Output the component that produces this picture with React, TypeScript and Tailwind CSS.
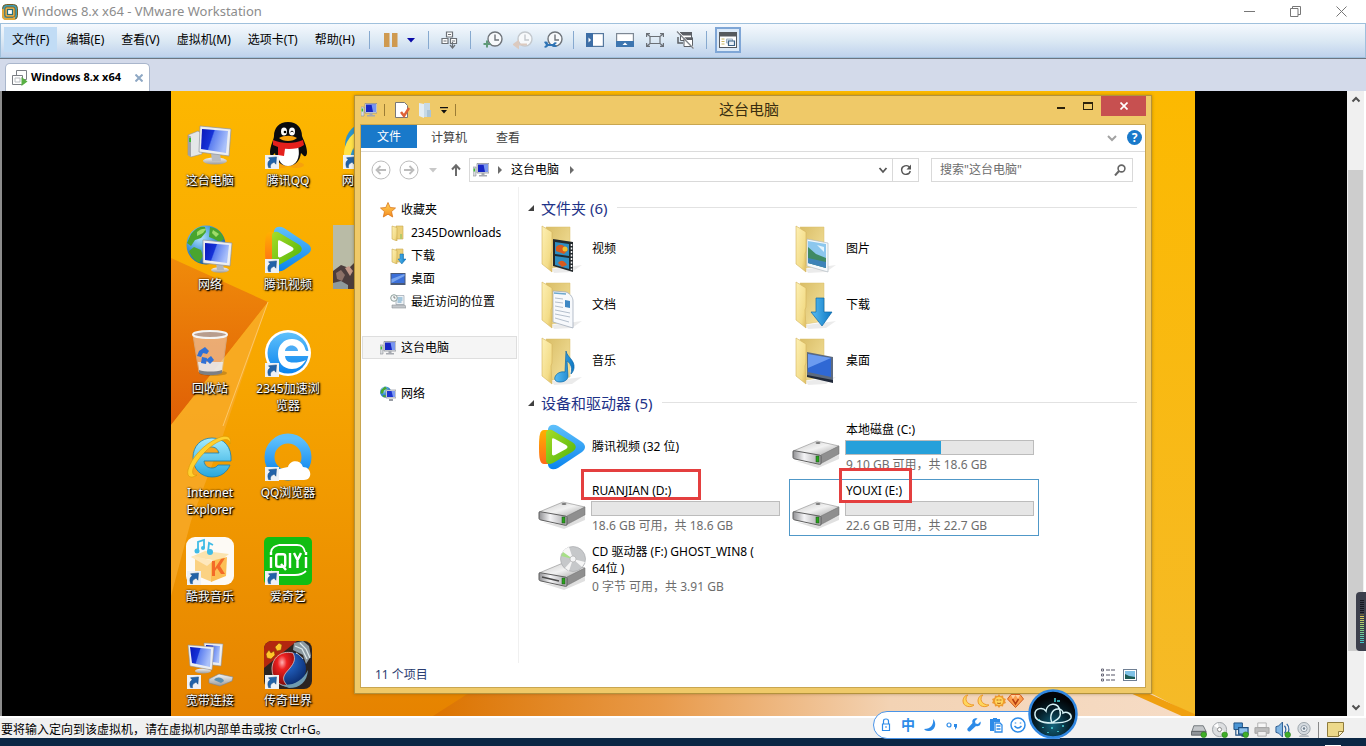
import type { ReactNode } from 'react';

type IconProps = { className?: string };

/* ---------- shared gradients ---------- */

function Gradients() {
  return (
    <svg className="absolute h-0 w-0" aria-hidden="true">
      <defs>
        <linearGradient id="screen" x1="0" y1="0" x2="1" y2="0.3">
          <stop offset="0" stopColor="#0a18b8" />
          <stop offset="0.45" stopColor="#1633d8" />
          <stop offset="0.5" stopColor="#5d7ff0" />
          <stop offset="1" stopColor="#a9c0fa" />
        </linearGradient>
        <linearGradient id="metal" x1="0" y1="0" x2="0" y2="1">
          <stop offset="0" stopColor="#f6f6f6" />
          <stop offset="1" stopColor="#9a9a9a" />
        </linearGradient>
        <linearGradient id="folderDoor" x1="0" y1="0" x2="1" y2="1">
          <stop offset="0" stopColor="#fdf0b4" />
          <stop offset="0.7" stopColor="#f3dc88" />
          <stop offset="1" stopColor="#dcb95a" />
        </linearGradient>
        <linearGradient id="folderBack" x1="0" y1="0" x2="1" y2="1">
          <stop offset="0" stopColor="#d9bd66" />
          <stop offset="1" stopColor="#f6e4a0" />
        </linearGradient>
        <linearGradient id="sky" x1="0" y1="0" x2="0" y2="1">
          <stop offset="0" stopColor="#5fc0fb" />
          <stop offset="1" stopColor="#0a84ee" />
        </linearGradient>
        <linearGradient id="lime" x1="0" y1="0" x2="1" y2="1">
          <stop offset="0" stopColor="#a6dc28" />
          <stop offset="1" stopColor="#4fb409" />
        </linearGradient>
        <linearGradient id="amber" x1="0" y1="0" x2="0" y2="1">
          <stop offset="0" stopColor="#ffb000" />
          <stop offset="1" stopColor="#ff6a1a" />
        </linearGradient>
        <radialGradient id="globe" cx="0.35" cy="0.3" r="0.8">
          <stop offset="0" stopColor="#b7e6ff" />
          <stop offset="0.5" stopColor="#3d93d9" />
          <stop offset="1" stopColor="#12508f" />
        </radialGradient>
        <linearGradient id="blueArrow" x1="0" y1="0" x2="1" y2="0">
          <stop offset="0" stopColor="#58bdf2" />
          <stop offset="1" stopColor="#0e78c4" />
        </linearGradient>
        <linearGradient id="ieBlue" x1="0" y1="0" x2="0" y2="1">
          <stop offset="0" stopColor="#a5ecff" />
          <stop offset="1" stopColor="#28a7dd" />
        </linearGradient>
        <linearGradient id="driveFront" x1="0" y1="0" x2="1" y2="0">
          <stop offset="0" stopColor="#8f8f92" />
          <stop offset="0.4" stopColor="#f4f4f6" />
          <stop offset="1" stopColor="#a8a8aa" />
        </linearGradient>
        <linearGradient id="driveTop" x1="0" y1="0" x2="1" y2="1">
          <stop offset="0" stopColor="#c8c8c8" />
          <stop offset="0.5" stopColor="#f2f2f2" />
          <stop offset="1" stopColor="#9e9e9e" />
        </linearGradient>
        <linearGradient id="star" x1="0" y1="0" x2="0" y2="1">
          <stop offset="0" stopColor="#ffd55a" />
          <stop offset="1" stopColor="#f68b1f" />
        </linearGradient>
        <radialGradient id="redBall" cx="0.45" cy="0.3" r="0.7">
          <stop offset="0" stopColor="#ffb3b3" />
          <stop offset="0.3" stopColor="#ee2020" />
          <stop offset="1" stopColor="#7c0808" />
        </radialGradient>
        <radialGradient id="blueBall" cx="0.4" cy="0.3" r="0.8">
          <stop offset="0" stopColor="#2c76e0" />
          <stop offset="1" stopColor="#06215f" />
        </radialGradient>
        <radialGradient id="night" cx="0.5" cy="0.75" r="0.6">
          <stop offset="0" stopColor="#12637c" />
          <stop offset="0.6" stopColor="#05202b" />
          <stop offset="1" stopColor="#020407" />
        </radialGradient>
      </defs>
    </svg>
  );
}

/* ---------- desktop icons ---------- */

function Shortcut() {
  return (
    <g>
      <rect x="1" y="34" width="14" height="14" fill="#eef1f5" />
      <path d="M4.500 46.500c-1.300-4-.6-6.300 1.700-7.800L4.500 36.800l8-.9-.6 7.300-1.700-1.900C8 42 5.800 43.600 6.600 46.700z" fill="#2162a8" stroke="#174a80" strokeWidth=".5" />
    </g>
  );
}

function ComputerIcon() {
  return (
    <svg viewBox="0 0 48 48" className="size-12">
      <path d="M2 14l10-4 4 3v20l-11 3-3-2z" fill="#e4e6e8" stroke="#8d9197" strokeWidth=".6" />
      <path d="M2 14l3 1.500V36l-3-2z" fill="#9da1a6" />
      <rect x="3" y="17" width="2" height="4" fill="#3bbf2e" />
      <ellipse cx="29" cy="40" rx="12" ry="3.500" fill="url(#metal)" />
      <path d="M25 32h9l1 8h-9z" fill="#b9bcc2" />
      <path d="M14 5l31 3-2 27-30-4z" fill="#eceef1" stroke="#8e929b" strokeWidth=".7" />
      <path d="M16 8l26 2-2 22-25-4z" fill="url(#screen)" />
    </svg>
  );
}

function NetworkIcon() {
  return (
    <svg viewBox="0 0 48 48" className="size-12">
      <circle cx="20" cy="20" r="19.500" fill="url(#globe)" />
      <path d="M5 9c5-6 9-8 14-7l1 5-5 6-6 2-4 6-4-3zM24 2c7 1 12 5 14 12l-4 3-6-3-5-2zM8 22l7 3 2 6-4 7c-5-3-8-7-10-12z" fill="#49a52e" />
      <path d="M11 7c3-3 7-4 9-3l-3 4-6 3zM27 5l6 4-3 3-4-4z" fill="#9fdc6a" />
      <ellipse cx="34" cy="45" rx="9" ry="2.800" fill="url(#metal)" />
      <path d="M30 38h7l1 7h-7z" fill="#b3b6bc" />
      <path d="M17 15l29 3-2 23-27-3z" fill="#eceef1" stroke="#8e929b" strokeWidth=".7" />
      <path d="M19 18l24 2-2 18-22-3z" fill="url(#screen)" />
    </svg>
  );
}

function BinIcon() {
  return (
    <svg viewBox="0 0 48 48" className="size-12">
      <ellipse cx="27" cy="44" rx="14" ry="3" fill="#000" opacity=".18" />
      <path d="M7 6h34l-5 37c-5 3-18 3-23 0z" fill="#f0d9cb" opacity=".55" stroke="#cfcfcf" />
      <path d="M12 33h25l-1.500 10c-5 2.500-17 2.500-22 0z" fill="#e9ebee" opacity=".85" />
      <path d="M13 41c6 2 17 2 23 0v3c-5 3-18 3-23 0z" fill="#7c7f84" />
      <ellipse cx="24" cy="5.500" rx="17" ry="3.500" fill="#b89d8e" stroke="#f4f4f4" strokeWidth="2" />
      <path d="M13 22l6-4 4 4-2 3-4-1-2 4-4-1zM16 28l5 1-1 6-5-1zM20 31l5-4 3 4-4 4z" fill="#2f71d6" />
    </svg>
  );
}

function IEIcon() {
  return (
    <svg viewBox="0 0 48 48" className="size-12">
      <path
        d="M26 5C15 5 7 13 7 24.500S15 44 26 44c8.500 0 15-4.500 18-12H32c-1.500 2-3.500 3-6 3-4.500 0-7.500-2.500-8-7h27C46 14 38 5 26 5zm-8 15c1-4 4-6 7.500-6s6.500 2 7.500 6z"
        fill="url(#ieBlue)"
        stroke="#1a7fb0"
        strokeWidth=".8"
      />
      <path d="M44 11c2-7-3-10-12-6C18 11 5 25 2 37c-1.500 7 3 9 9 5-4 1-5-2-4-6C11 26 24 12 34 8c6-2.500 10-2 10 3z" fill="#ffd02e" stroke="#d79505" strokeWidth=".6" />
    </svg>
  );
}

function KuwoIcon() {
  return (
    <svg viewBox="0 0 48 48" className="size-12">
      <rect width="48" height="48" rx="9" fill="#fdfaf5" />
      <path d="M5 20l14-6 24 3-9 7z" fill="#fbe3ae" />
      <path d="M9 21l17 4v20L9 38z" fill="#fbd283" />
      <path d="M25 24l16-4-1 19-15 6z" fill="#fcbf55" />
      <path d="M5 20l4-1 18 5-6 5z" fill="#fee8bd" />
      <path d="M26 24l3 0v7l6-9 4-1-5 8 5 8h-4l-4-6-2 3v5h-3z" fill="#f46a28" />
      <path d="M12 14V5l6-2v8M22 15l1-9 4 2" fill="none" stroke="#3fbbe6" strokeWidth="1.800" />
      <circle cx="11" cy="14" r="2.500" fill="#3fbbe6" />
      <circle cx="17" cy="11" r="2" fill="#3fbbe6" />
      <circle cx="24" cy="15" r="3" fill="#3fbbe6" />
      <Shortcut />
    </svg>
  );
}

function DialUpIcon() {
  return (
    <svg viewBox="0 0 48 48" className="size-12">
      <path d="M18 2l19 1-2 22-16-2z" fill="#eceef1" stroke="#8e929b" strokeWidth=".6" />
      <path d="M20 4l14 1-1 17-13-2z" fill="url(#screen)" />
      <ellipse cx="17" cy="30" rx="8" ry="2.500" fill="url(#metal)" />
      <path d="M2 4l26 2-2 23L4 25z" fill="#eceef1" stroke="#8e929b" strokeWidth=".6" />
      <path d="M4 6l21 2-1 18L6 22z" fill="url(#screen)" />
      <path d="M23 38l10-5 14 3-1 4-12 5-11-3z" fill="url(#metal)" stroke="#7b8490" strokeWidth=".6" />
      <path d="M28 39c2-4 9-3 10 1l-3 2z" fill="#5c8fb0" />
      <Shortcut />
    </svg>
  );
}

function QQIcon() {
  return (
    <svg viewBox="0 0 48 48" className="size-12">
      <ellipse cx="17" cy="44" rx="8" ry="3" fill="#f7a10c" />
      <ellipse cx="32" cy="44" rx="8" ry="3" fill="#f7a10c" />
      <path d="M24 1c-9 0-14 6-14 14 0 3-4 10-4 16 0 3 1 5 2 4l3-3c1 8 6 13 13 13s12-5 13-13l3 3c2 1 3-1 3-4 0-6-4-13-5-16C38 7 33 1 24 1z" fill="#0b0b0d" />
      <path d="M15 25c-3 12 1 20 9 20s13-8 10-20z" fill="#fff" />
      <path d="M9 19c9 4 21 4 30 0l1 5c-4 3-10 4-15 4l-4-.2L20 35l-6-1v-8l-5-2z" fill="#e4201c" />
      <ellipse cx="20" cy="10.500" rx="3" ry="4" fill="#fff" />
      <ellipse cx="28" cy="10.500" rx="3" ry="4" fill="#fff" />
      <circle cx="21" cy="11" r="1.300" />
      <path d="M26.500 11q1.500-2 3 0" fill="none" stroke="#000" />
      <path d="M15 17c5-3 13-3 18 0-4 4-14 4-18 0z" fill="#f9a30d" />
      <Shortcut />
    </svg>
  );
}

function VideoArt({ shortcut }: { shortcut?: boolean }) {
  return (
    <svg viewBox="0 0 48 48" className="size-12 shrink-0">
      <path d="M6 7c-4 0-5 5-5 17s1 17 5 17h6V7z" fill="url(#amber)" />
      <path d="M10 6c1-5 6-5 10-3l24 16c4 3 4 7 0 10L20 45c-4 2-9 2-10-3z" fill="url(#sky)" />
      <path d="M8 10c0-3 3-4 6-3l20 12c5 3 5 7 0 10L15 40c-4 2-7 1-7-3z" fill="url(#lime)" />
      <path d="M14 17c0-2 1-2 3-1l11 6c2 1 2 3 0 4l-11 6c-2 1-3 0-3-1z" fill="#fff" />
      {shortcut && <Shortcut />}
    </svg>
  );
}

function Browser2345Icon() {
  return (
    <svg viewBox="0 0 48 48" className="size-12">
      <circle cx="24" cy="24" r="23" fill="#fff" />
      <circle cx="24" cy="24" r="20.500" fill="url(#sky)" />
      <path d="M45 27H21c.5 4.500 3 6.500 8 6.500 5 0 9-.5 13-2.500-4 6-8 9-14 9-9 0-14-6.500-14-15 0-9 6-15 14-15 7 0 12 4 13.500 11l1 1H45z" fill="#fff" />
      <path d="M21 22h13c0-3-3-5.500-6.500-5.500S21 19 21 22z" fill="#4bacf6" />
      <Shortcut />
    </svg>
  );
}

function QQBrowserIcon() {
  return (
    <svg viewBox="0 0 48 48" className="size-12">
      <circle cx="24" cy="24" r="18.500" fill="none" stroke="url(#sky)" strokeWidth="10" />
      <path d="M10 47c-5 0-7-9 1-10 2 0 6-2 13-3 2-7 12-8 15 0 9 0 10 13 1 13z" fill="#fff" />
      <Shortcut />
    </svg>
  );
}

function IqiyiIcon() {
  return (
    <svg viewBox="0 0 48 48" className="size-12">
      <rect width="48" height="48" rx="5" fill="#11bd12" />
      <path d="M7 15c1-5 4-6 8-7h18c5 0 7 2 8 7M7 34c2 3 4 4 8 4h16c5 0 8-1 11-4" fill="none" stroke="#fff" strokeWidth="1.800" />
      <g fill="none" stroke="#fff" strokeWidth="2.400">
        <path d="M7 20v11M7 15v3M26 16v15M42 20v11M42 15v3M30 16l3.500 7 3.500-7M33.500 22v9" />
        <rect x="12.200" y="17.200" width="9" height="12.600" rx="2" />
        <path d="M17 27l5 6" />
      </g>
      <Shortcut />
    </svg>
  );
}

function LegendIcon() {
  return (
    <svg viewBox="0 0 48 48" className="size-12">
      <rect width="48" height="48" rx="8" fill="#2b2422" />
      <path d="M0 8a8 8 0 018-8h25L0 27z" fill="#b3270f" />
      <path d="M30 2l9-2 6 5 2 10-5 8-3-9-10-5z" fill="#8c9aa1" />
      <path d="M31 5l7 3 5 10M36 2l6 6 4 9M32 12l7 6" stroke="#dbe7ea" strokeWidth="1.300" fill="none" />
      <circle cx="25" cy="28" r="17" fill="url(#blueBall)" />
      <path d="M29 12c-12-3-21 5-21 16s9 18 16 17c-9-8-2-13 2-18s6-9 3-15z" fill="url(#redBall)" stroke="#e7c7bd" strokeWidth=".8" />
      <path d="M15 43c12 3 23-2 29-14-1 12-8 18-19 18z" fill="#6f9bb0" />
      <path d="M2 13l3-4 2 3 3-2 1 4-4 4-4-1zM11 6l4-4 3 2-1 5-4 1z" fill="#ffc629" stroke="#7a4500" strokeWidth=".5" />
      <Shortcut />
    </svg>
  );
}

function CoveredIcon() {
  return (
    <svg viewBox="0 0 48 48" className="size-12">
      <circle cx="26" cy="24" r="19" fill="none" stroke="#2a94cf" strokeWidth="8" />
      <path d="M2 34C2 18 14 8 26 6l6 8C20 14 10 24 8 38z" fill="#ffe14a" />
      <Shortcut />
    </svg>
  );
}

function PhotoThumb() {
  return (
    <svg viewBox="0 0 66 64" className="h-16 w-[66px]">
      <rect width="66" height="64" fill="#b9bba6" />
      <path d="M0 46l8-6 8 3 6-6v27H0z" fill="#4c3d3d" />
      <path d="M3 48l5-3 4 5-3 6-5-2z" fill="#8d7168" />
      <path d="M12 43l4-2 4 5-3 5z" fill="#c49a8b" />
      <path d="M0 58l8-2 7 4v4H0z" fill="#8f9a9c" />
    </svg>
  );
}

const desktopItems: { label: string; icon: ReactNode }[] = [
  { label: '这台电脑', icon: <ComputerIcon /> },
  { label: '网络', icon: <NetworkIcon /> },
  { label: '回收站', icon: <BinIcon /> },
  { label: 'Internet Explorer', icon: <IEIcon /> },
  { label: '酷我音乐', icon: <KuwoIcon /> },
  { label: '宽带连接', icon: <DialUpIcon /> },
  { label: '腾讯QQ', icon: <QQIcon /> },
  { label: '腾讯视频', icon: <VideoArt shortcut /> },
  { label: '2345加速浏览器', icon: <Browser2345Icon /> },
  { label: 'QQ浏览器', icon: <QQBrowserIcon /> },
  { label: '爱奇艺', icon: <IqiyiIcon /> },
  { label: '传奇世界', icon: <LegendIcon /> },
  { label: '网页浏览', icon: <CoveredIcon /> },
  { label: '', icon: <PhotoThumb /> },
];

function Wallpaper() {
  return (
    <svg viewBox="0 0 1024 625" preserveAspectRatio="none" className="absolute inset-0 h-full w-full" aria-hidden="true">
      <defs>
        <linearGradient id="wall" x1="0" y1="0" x2="0" y2="1">
          <stop offset="0" stopColor="#fdb700" />
          <stop offset="0.45" stopColor="#f7a600" />
          <stop offset="1" stopColor="#e68300" />
        </linearGradient>
        <linearGradient id="wallRight" x1="0" y1="0" x2="0" y2="1">
          <stop offset="0" stopColor="#fcb900" />
          <stop offset="1" stopColor="#f5ba28" />
        </linearGradient>
        <linearGradient id="ridge" x1="0" y1="0" x2="0" y2="1">
          <stop offset="0" stopColor="#f08b0a" />
          <stop offset="1" stopColor="#df5f06" />
        </linearGradient>
        <linearGradient id="floor" x1="0" y1="0" x2="1" y2="0">
          <stop offset="0" stopColor="#dc7400" />
          <stop offset="0.3" stopColor="#e89a4a" />
          <stop offset="0.6" stopColor="#f3d3b4" />
          <stop offset="1" stopColor="#f6dcc6" />
        </linearGradient>
      </defs>
      <rect width="1024" height="625" fill="url(#wall)" />
      <rect x="600" width="424" height="625" fill="url(#wallRight)" />
      <path d="M0 167L97 211 0 334z" fill="url(#ridge)" />
      <path d="M97 211L50 350 20 430 0 505V334z" fill="#f8ab2c" opacity=".75" />
      <path d="M97 211L52 335" stroke="#fcc768" />
      <path d="M262 625l50-32h650l62 32z" fill="url(#floor)" />
      <path d="M950 594l76 34" stroke="#f0a010" strokeWidth="7" />
    </svg>
  );
}

/* ---------- small icons ---------- */

function MiniComputer({ className = '' }: IconProps) {
  return (
    <svg viewBox="0 0 16 16" className={`size-4 shrink-0 ${className}`}>
      <path d="M0 5h3v9H0z" fill="#d9dcdf" stroke="#8b8f94" strokeWidth=".6" />
      <path d="M.6 6.500h1.400v3H.6z" fill="#3fbf35" />
      <path d="M4 1.500h12V11H4z" fill="#e3e5e9" stroke="#80858e" strokeWidth=".7" />
      <path d="M5 2.500h10V10H5z" fill="#1726c4" />
      <path d="M10.500 2.500H15V10h-3z" fill="#7896f0" />
      <path d="M8.500 11h3v2H14v1.500H6V13h2.500z" fill="#a6a9b0" />
    </svg>
  );
}

function MiniNetwork() {
  return (
    <svg viewBox="0 0 16 16" className="size-4 shrink-0">
      <circle cx="5.500" cy="6" r="5.500" fill="url(#globe)" />
      <path d="M1 4l4-3.500 2 2-3 2-1 3H.5zM3 9l3 .5-1 2-2-1z" fill="#49a52e" />
      <path d="M6 4h10v8H6z" fill="#e3e5e9" stroke="#80858e" strokeWidth=".6" />
      <path d="M7 5h8v6H7z" fill="#1d34cf" />
      <path d="M11.500 5H15v6h-2z" fill="#7e9bf2" />
      <path d="M9 13h4v2H9z" fill="#999da4" />
    </svg>
  );
}

function MiniFolder({ arrow }: { arrow?: boolean }) {
  return (
    <svg viewBox="0 0 16 16" className="size-4 shrink-0">
      <path d="M6 1h7v13H6z" fill="#ecd078" stroke="#c9a94e" strokeWidth=".6" />
      <path d="M2 1l5 1.500V16l-5-2z" fill="url(#folderDoor)" stroke="#c9a94e" strokeWidth=".6" />
      {arrow && <path d="M10 6h3.500v5H16l-4.200 5L8 11h2z" fill="url(#blueArrow)" stroke="#0d68a8" strokeWidth=".5" />}
      {!arrow && <path d="M10 9h2v5h-2z" fill="#b7c96b" />}
    </svg>
  );
}

function MiniDesktop() {
  return (
    <svg viewBox="0 0 16 16" className="size-4 shrink-0">
      <rect x=".5" y="2" width="15" height="12" fill="#4a5a78" />
      <rect x="1.500" y="3" width="13" height="9" fill="#3b6fd8" />
      <path d="M1.500 12V8l13-5v2z" fill="#78a4ee" />
    </svg>
  );
}

function MiniRecent() {
  return (
    <svg viewBox="0 0 16 16" className="size-4 shrink-0">
      <path d="M6 1.500h8v9H6z" fill="#eef2f5" stroke="#9aa4ad" strokeWidth=".7" />
      <path d="M7.500 4h5M7.500 6h5M7.500 8h4" stroke="#5d9cc4" />
      <path d="M2 11h13l1 3H2z" fill="#c3c7cb" stroke="#8d9399" strokeWidth=".6" />
      <circle cx="4" cy="4" r="3.300" fill="#f4f7f8" stroke="#8fa09c" />
      <path d="M4 2v2h1.500" fill="none" stroke="#555" strokeWidth=".7" />
    </svg>
  );
}

function StarIcon() {
  return (
    <svg viewBox="0 0 16 16" className="size-4 shrink-0">
      <path d="M8 .5l2.200 5 5.300.5-4 3.600 1.200 5.400L8 12.200 3.300 15l1.200-5.400-4-3.600 5.300-.5z" fill="url(#star)" stroke="#d9761a" strokeWidth=".8" />
    </svg>
  );
}

/* ---------- explorer large icons ---------- */

function Folder({ children }: { children: ReactNode }) {
  return (
    <svg viewBox="0 0 48 48" className="size-12 shrink-0">
      <path d="M14 44l30-4-10 7-18 1z" fill="#000" opacity=".08" />
      <path d="M8 2h24v38l-18 3z" fill="url(#folderBack)" stroke="#d8bd6a" strokeWidth=".5" />
      {children}
      <path d="M4 1l10 6v19l-1 3 1 18L4 39z" fill="url(#folderDoor)" stroke="#d3b45c" strokeWidth=".6" />
    </svg>
  );
}

const folders: { label: string; icon: ReactNode }[] = [
  {
    label: '视频',
    icon: (
      <Folder>
        <path d="M15 14l20 3v30l-20-6z" fill="#23292c" />
        <path d="M17 17l14 2v12l-14-2zM17 31l14 2v11l-14-4z" fill="#2f8ec2" />
        <path d="M18 22c4-4 8-2 12 3l-4 4-8-3zM20 38c3-4 7-2 9 2l-5 2z" fill="#d85a1e" />
        <circle cx="27" cy="24" r="2.500" fill="#f0c12d" />
        <path d="M33.500 19v26" stroke="#f4f4f4" strokeWidth="1.500" strokeDasharray="2 1.500" />
      </Folder>
    ),
  },
  {
    label: '图片',
    icon: (
      <Folder>
        <path d="M15 14l21 4v29l-21-6z" fill="#f6f9fb" stroke="#a9b3ba" strokeWidth=".6" />
        <path d="M16 16l18 3v24l-18-5z" fill="#8cc7ee" />
        <path d="M16 22l8 7 10 4v10l-18-5z" fill="#3f8a63" />
        <path d="M16 33l18 4v6l-18-5z" fill="#3d83b8" />
        <path d="M25 20l7 2v5z" fill="#e4f4fd" />
      </Folder>
    ),
  },
  {
    label: '文档',
    icon: (
      <Folder>
        <path d="M15 10l13 1c5 2 7 6 7 9v27l-20-6z" fill="#f7f9fc" stroke="#9aa5b5" strokeWidth=".7" />
        <path d="M17 17l8 1M17 21l8 1M17 25l8 1.500M17 29l15 3M17 33l15 3M17 37l14 4" stroke="#b4bfcc" strokeWidth="1" />
        <path d="M27 19l5 1v7l-5-1z" fill="#3f88c4" />
        <path d="M16 12l12 1" stroke="#6da7cc" strokeWidth="1.500" />
      </Folder>
    ),
  },
  {
    label: '下载',
    icon: (
      <Folder>
        <path d="M24 17h8v14h8L30 45 19 31h5z" fill="url(#blueArrow)" stroke="#0b67a6" strokeWidth=".7" />
      </Folder>
    ),
  },
  {
    label: '音乐',
    icon: (
      <Folder>
        <path d="M28 14c1 6 9 9 8 17-.4 3-2 5-3 6 2-8-2-12-4-13l1 15c0 4-4 6-8 6s-6-2-5-5 5-6 10-5z" fill="url(#blueArrow)" stroke="#0b67a6" strokeWidth=".7" />
      </Folder>
    ),
  },
  {
    label: '桌面',
    icon: (
      <Folder>
        <path d="M15 15l26 5v25l-26-6z" fill="#5d6a7e" />
        <path d="M16 17l23 4v19l-23-5z" fill="#2f68d4" />
        <path d="M16 17l23 4L16 31z" fill="#6b9bf0" />
        <path d="M15 38l26 5v3l-26-6z" fill="#20293a" />
      </Folder>
    ),
  },
];

function DriveArt({ disc }: { disc?: boolean }) {
  return (
    <svg viewBox="0 0 48 48" className="size-12 shrink-0">
      <path d="M4 38l22 7 21-9v-4L26 41z" fill="#000" opacity=".12" />
      <path d="M1 28l24-10 22 5-18 10-27-3z" fill="url(#driveTop)" stroke="#8b8b8b" strokeWidth=".6" />
      <path d="M29 32l18-9v8L28 41z" fill="#8f8f8f" stroke="#6f6f6f" strokeWidth=".5" />
      <path d="M1 29c0-1.500 1-1.500 3-1l23 4c2 .3 2 1 2 2v6c0 1.500-1 1.500-3 1L3 36c-2-.5-2-1-2-2z" fill="url(#driveFront)" stroke="#5f5f5f" strokeWidth="1" />
      {disc ? <path d="M4 32l17 4" stroke="#4a4a4a" strokeWidth="1.600" /> : <ellipse cx="26" cy="20" rx="2.500" ry="1" fill="#777" />}
      <rect x="24" y="33" width="3" height="6" fill="#27a31b" stroke="#1d4d18" strokeWidth=".5" />
      {disc && (
        <g>
          <circle cx="35" cy="14" r="12.500" fill="#c6c8ca" stroke="#a3a5a8" strokeWidth=".6" />
          <path d="M35 14L24 8a12.500 12.500 0 017-6z" fill="#f7f7f7" />
          <path d="M35 14L23 11l2-4z" fill="#a7df87" />
          <path d="M35 14l12 3-3 5z" fill="#f6f6f6" />
          <path d="M35 14l-4 12-4-3z" fill="#f4f4f4" />
          <circle cx="35" cy="14" r="3" fill="#f4f5f6" stroke="#a9a9a9" strokeWidth=".6" />
        </g>
      )}
    </svg>
  );
}

function SectionHeader({ title }: { title: string }) {
  return (
    <div className="flex h-[27px] items-center gap-1.5 pr-2 pl-2">
      <svg viewBox="0 0 8 8" className="size-2 shrink-0">
        <path d="M7 1v6H1z" fill="#404040" />
      </svg>
      <h2 className="text-[15px] text-[#1e3287]">{title}</h2>
      <div className="ml-1 h-px flex-1 bg-[#e2e2e2]" />
    </div>
  );
}

function Drive({ name, info, used, selected, mark }: { name: string; info: string; used: number; selected?: boolean; mark?: string }) {
  return (
    <div className={`relative flex h-[57px] items-center gap-[5px] border pl-0.5 ${selected ? 'border-[#5098c8]' : 'border-transparent'}`}>
      <DriveArt />
      <div className="min-w-0 flex-1 pr-1 leading-[17px]">
        <div className="pl-px">{name}</div>
        <div className="mt-0.5 mb-px h-[15px] border border-[#bcbcbc] bg-[#e6e6e6]">
          <div className="h-full bg-[#26a0da]" style={{ width: `${used}%` }} />
        </div>
        <div className="pl-px text-[#6d6d6d]">{info}</div>
      </div>
      {mark && <div className={`absolute border-[3px] border-[#e43f3f] ${mark}`} />}
    </div>
  );
}

function Explorer() {
  return (
    <section className="absolute top-1 right-[43px] bottom-[22px] left-[183px] flex flex-col border border-[#b3923c] bg-[#efc968] px-[5px] pb-[5px] shadow-[0_0_3px_rgba(90,60,0,0.4)]">
      <header className="grid h-7 shrink-0 grid-cols-[1fr_auto_1fr] items-start">
        <div className="flex items-center gap-[7px] pt-1.5 pl-px">
          <MiniComputer />
          <span className="h-3 w-px bg-[#9b7d35]" />
          <button aria-label="属性" className="ml-0.5">
            <svg viewBox="0 0 16 16" className="size-4">
              <path d="M1.500.5h9l3 3v12h-12z" fill="#fff" stroke="#777" />
              <path d="M7 10l3 4 5-8" fill="none" stroke="#df6236" strokeWidth="2.500" />
            </svg>
          </button>
          <button aria-label="新建文件夹">
            <svg viewBox="0 0 16 16" className="size-4">
              <path d="M7 1h6v14H7z" fill="#c7d9e6" />
              <path d="M2 1l5 1v14l-5-2z" fill="#e3edf4" />
              <path d="M10 8h4v7h-4z" fill="#abc4d6" />
            </svg>
          </button>
          <button aria-label="自定义快速访问工具栏">
            <svg viewBox="0 0 8 8" className="size-2">
              <path d="M0 1h8v1.200H0zM1 4h6L4 7.500z" fill="#111" />
            </svg>
          </button>
          <span className="h-3 w-px bg-[#9b7d35]" />
        </div>
        <h1 className="mr-2 pt-[3px] text-[15px] leading-5 text-[#3a2e10]">这台电脑</h1>
        <div className="flex justify-end">
          <button aria-label="最小化" className="flex h-5 w-[27px] items-center justify-center">
            <span className="mt-1 h-0.5 w-2 bg-[#2b210b]" />
          </button>
          <button aria-label="最大化" className="flex h-5 w-[27px] items-center justify-center">
            <span className="h-2 w-2.5 border border-t-2 border-[#2b210b]" />
          </button>
          <button aria-label="关闭" className="flex h-5 w-[45px] items-center justify-center bg-[#c75050]">
            <svg viewBox="0 0 8 8" className="size-2">
              <path d="M.5.5l7 7M7.500.5l-7 7" stroke="#fff" strokeWidth="1.700" />
            </svg>
          </button>
        </div>
      </header>

      <div className="flex min-h-0 flex-1 flex-col border border-[#c9a650] bg-white">
        <nav className="flex h-[27px] shrink-0 items-start border-b border-[#dcdcdc] pr-[3px]">
          <button className="h-[23px] w-14 bg-[#1979ca] text-white">文件</button>
          <button className="h-[26px] w-16 text-[#3f3f3f]">计算机</button>
          <button className="h-[26px] w-[54px] text-[#3f3f3f]">查看</button>
          <span className="flex-1" />
          <button aria-label="展开功能区" className="mt-2 mr-2.5">
            <svg viewBox="0 0 10 10" className="size-2.5">
              <path d="M1 3l4 4 4-4" fill="none" stroke="#a2a2a2" strokeWidth="2" />
            </svg>
          </button>
          <button aria-label="帮助" className="mt-[5px] flex size-[15px] items-center justify-center rounded-full bg-[#1979ca] text-xs font-bold text-white">
            ?
          </button>
        </nav>

        <div className="flex h-[35px] shrink-0 items-center pr-3 pl-2.5">
          <button aria-label="后退">
            <svg viewBox="0 0 20 20" className="size-5" fill="none" stroke="#bcbcbc">
              <circle cx="10" cy="10" r="9" />
              <path d="M15 10H6M9.500 6L5.500 10l4 4" strokeWidth="1.800" />
            </svg>
          </button>
          <button aria-label="前进" className="ml-2">
            <svg viewBox="0 0 20 20" className="size-5" fill="none" stroke="#bcbcbc">
              <circle cx="10" cy="10" r="9" />
              <path d="M5 10h9M10.500 6l4 4-4 4" strokeWidth="1.800" />
            </svg>
          </button>
          <button aria-label="最近位置" className="ml-2.5">
            <svg viewBox="0 0 8 8" className="size-2">
              <path d="M0 2h8L4 6.500z" fill="#c8c8c8" />
            </svg>
          </button>
          <button aria-label="向上" className="ml-3">
            <svg viewBox="0 0 14 14" className="size-3.5" fill="none" stroke="#6b6b6b" strokeWidth="2">
              <path d="M7 13V2M3 6.500l4-4.300 4 4.300" />
            </svg>
          </button>
          <div className="ml-1.5 flex h-6 flex-1 items-center border border-[#d9d9d9] pl-[3px]">
            <MiniComputer />
            <svg viewBox="0 0 6 8" className="ml-2 h-2 w-1.5">
              <path d="M1 0l4 4-4 4z" fill="#6b6b6b" />
            </svg>
            <button className="ml-2">这台电脑</button>
            <svg viewBox="0 0 6 8" className="ml-2.5 h-2 w-1.5">
              <path d="M1 0l4 4-4 4z" fill="#6b6b6b" />
            </svg>
            <span className="flex-1" />
            <button aria-label="上一个位置" className="mr-1">
              <svg viewBox="0 0 10 10" className="size-2.5">
                <path d="M1.500 3L5 7l3.500-4" fill="none" stroke="#555" strokeWidth="1.800" />
              </svg>
            </button>
            <button aria-label="刷新" className="flex h-full w-[26px] items-center justify-center border-l border-[#d9d9d9]">
              <svg viewBox="0 0 12 12" className="size-3">
                <path d="M10 4.500A4.300 4.300 0 106.500 10.300 4.300 4.300 0 0010.300 7" fill="none" stroke="#555" strokeWidth="1.400" />
                <path d="M11 .5V5.500H6.500z" fill="#555" />
              </svg>
            </button>
          </div>
          <label className="ml-3 flex h-6 w-[202px] items-center border border-[#d9d9d9] pr-1.5 pl-2">
            <input type="search" aria-label="搜索" placeholder='搜索"这台电脑"' className="min-w-0 flex-1 bg-transparent outline-none placeholder:text-[#6d6d6d]" />
            <svg viewBox="0 0 12 12" className="size-3">
              <circle cx="7.500" cy="4.500" r="3.400" fill="none" stroke="#666" strokeWidth="1.600" />
              <path d="M5 7L1 11.500" stroke="#666" strokeWidth="2" />
            </svg>
          </label>
        </div>

        <div className="flex min-h-0 flex-1">
          <aside className="w-[158px] shrink-0 border-r border-[#f0f0f0] pt-[11px] pr-px pl-px leading-[23px]">
            <a href="#favorites" className="flex h-[23px] items-center gap-[5px] pl-[18px]"><StarIcon />收藏夹</a>
            <a href="#2345" className="flex h-[23px] items-center gap-[5px] pl-7"><MiniFolder />2345Downloads</a>
            <a href="#downloads" className="flex h-[23px] items-center gap-[5px] pl-7"><MiniFolder arrow />下载</a>
            <a href="#desktop" className="flex h-[23px] items-center gap-[5px] pl-7"><MiniDesktop />桌面</a>
            <a href="#recent" className="flex h-[23px] items-center gap-[5px] pl-7"><MiniRecent />最近访问的位置</a>
            <a href="#pc" className="mt-[23px] flex h-[23px] items-center gap-[5px] border border-[#dedede] bg-[#f5f5f5] pl-[17px]"><MiniComputer />这台电脑</a>
            <a href="#network" className="mt-[23px] flex h-[23px] items-center gap-[5px] pl-[18px]"><MiniNetwork />网络</a>
          </aside>

          <main className="min-w-0 flex-1 pt-[7px]">
            <SectionHeader title="文件夹 (6)" />
            <div className="grid grid-cols-[250px_250px] gap-x-1 pl-4">
              {folders.map((f) => (
                <div key={f.label} className="flex h-14 items-center gap-1.5 pl-[3px]">
                  {f.icon}
                  <span>{f.label}</span>
                </div>
              ))}
            </div>
            <SectionHeader title="设备和驱动器 (5)" />
            <div className="grid grid-cols-[250px_250px] gap-1 pt-0.5 pl-4">
              <div className="flex h-[57px] items-center gap-1.5 pl-[3px]">
                <VideoArt />
                <span>腾讯视频 (32 位)</span>
              </div>
              <Drive name="本地磁盘 (C:)" info="9.10 GB 可用，共 18.6 GB" used={51} />
              <Drive name="RUANJIAN (D:)" info="18.6 GB 可用，共 18.6 GB" used={0} mark="-top-[11px] left-[45px] h-[31px] w-[120px]" />
              <Drive name="YOUXI (E:)" info="22.6 GB 可用，共 22.7 GB" used={0} selected mark="-top-3 left-[49px] h-[35px] w-[73px]" />
              <div className="flex h-[57px] items-center gap-1.5 pl-[3px]">
                <DriveArt disc />
                <div className="w-[180px] leading-[17px]">
                  <div>CD 驱动器 (F:) GHOST_WIN8 (<br />64位 )</div>
                  <div className="mt-px text-[#6d6d6d]">0 字节 可用，共 3.91 GB</div>
                </div>
              </div>
            </div>
          </main>
        </div>

        <footer className="flex h-6 shrink-0 items-center pr-2 pl-3.5 text-[#2a3c70]">
          <span className="flex-1">11 个项目</span>
          <button aria-label="详细信息">
            <svg viewBox="0 0 16 14" className="h-3.5 w-4">
              <path d="M1.500 1h2v2h-2zM1.500 6h2v2h-2zM1.500 11h2v2h-2z" fill="#fff" stroke="#667" />
              <path d="M6 2h4M11 2h4M6 7h4M11 7h4M6 12h4M11 12h4" stroke="#556" strokeWidth="1.200" />
            </svg>
          </button>
          <button aria-label="大图标" className="ml-[7px]">
            <svg viewBox="0 0 14 12" className="h-3 w-3.5">
              <rect x=".5" y=".5" width="13" height="11" fill="#fff" stroke="#6f7f93" />
              <path d="M2 2h10v8H2z" fill="#7fc1e6" />
              <path d="M2 5l4 2 6 1v2H2z" fill="#1d5b55" />
            </svg>
          </button>
        </footer>
      </div>
    </section>
  );
}

/* ---------- outer toolbar ---------- */

function Divider() {
  return <span className="h-[18px] w-px shrink-0 bg-[#86a9cf]" />;
}

function Clock({ faded }: { faded?: boolean }) {
  const c = faded ? '#c3c8cd' : '#6f747a';
  return (
    <g fill="none" stroke={c}>
      <circle cx="12" cy="8" r="7" fill="#f7f9fb" strokeWidth="1.400" />
      <path d="M12 3.500V9h4" strokeWidth="1.400" />
    </g>
  );
}

function Toolbar() {
  const btn = 'flex shrink-0 items-center justify-center';
  return (
    <div className="flex items-center">
      <Divider />
      <button aria-label="暂停" className={`${btn} ml-3.5`}>
        <svg viewBox="0 0 14 14" className="size-3.5"><path d="M0 0h5.500v14H0zM8 0h5.500v14H8z" fill="#cf9a50" /></svg>
      </button>
      <button aria-label="电源选项" className={`${btn} mr-[13px] ml-[9px]`}>
        <svg viewBox="0 0 8 6" className="h-1.5 w-2"><path d="M0 1h8L4 5.500z" fill="#0909a8" /></svg>
      </button>
      <Divider />
      <button aria-label="发送 Ctrl+Alt+Del" className={`${btn} mx-3`}>
        <svg viewBox="0 0 17 18" className="h-[18px] w-[17px]" fill="#fff" stroke="#6b7076" strokeWidth="1.200">
          <path d="M5.500 1h6v5h-6zM1 7.500h6v5H1zM9.500 7.500h6v5h-6zM7 3.500h3M2.500 10h3M11 10h3" />
          <path d="M11.500 11v5.500M9 14l2.500 3 2.500-3" fill="none" />
        </svg>
      </button>
      <Divider />
      <button aria-label="拍摄快照" className={`${btn} ml-3`}>
        <svg viewBox="0 0 20 20" className="size-5"><g transform="translate(0 1)"><Clock /></g><path d="M4 10.500v7M.5 14h7" stroke="#5f9a78" strokeWidth="2" /></svg>
      </button>
      <button aria-label="恢复快照" className={`${btn} ml-2.5`}>
        <svg viewBox="0 0 20 20" className="size-5"><g transform="translate(0 1)"><Clock faded /></g><path d="M14 14.500H4M5 11.500l-4 3 4 3z" stroke="#dccabf" fill="#dccabf" strokeWidth="2" /></svg>
      </button>
      <button aria-label="管理快照" className={`${btn} ml-2.5`}>
        <svg viewBox="0 0 20 20" className="size-5"><g transform="translate(0 1)"><Clock /></g><path d="M1 12c3-1 4 0 4 2h5c1-2 3-2 4-1l-2 1.500 2 2c-2 1-4 .5-5-.5H5c-1 2-3 2-4 1l2-2z" fill="#2f74b5" /></svg>
      </button>
      <span className="w-2.5" />
      <Divider />
      <button aria-label="显示库" className={`${btn} ml-3`}>
        <svg viewBox="0 0 18 14" className="h-3.5 w-[18px]"><rect x=".6" y=".6" width="16.800" height="12.800" fill="#fff" stroke="#55789e" strokeWidth="1.200" /><path d="M0 0h7v14H0z" fill="#3d6ea6" /><path d="M2.500 4.500L5 7 2.500 9.500z" fill="#fff" /></svg>
      </button>
      <button aria-label="显示缩略图栏" className={`${btn} ml-3`}>
        <svg viewBox="0 0 18 14" className="h-3.5 w-[18px]"><rect x=".6" y=".6" width="16.800" height="12.800" fill="#fff" stroke="#7d8894" strokeWidth="1.200" /><path d="M0 8h18v6H0z" fill="#3d76b0" /><path d="M6.500 12L9 9.500l2.500 2.500z" fill="#fff" /></svg>
      </button>
      <button aria-label="全屏" className={`${btn} ml-3`}>
        <svg viewBox="0 0 18 14" className="h-3.5 w-[18px]" fill="none" stroke="#6b7076" strokeWidth="1.200"><path d="M4 3.500h10v7H4zM.6 4V.6H4M14 .6h3.400V4M17.400 10v3.400H14M4 13.400H.6V10M1 1l3 2.500M17 1l-3 2.500M1 13l3-2.500M17 13l-3-2.500" /></svg>
      </button>
      <button aria-label="Unity" className={`${btn} ml-3`}>
        <svg viewBox="0 0 18 18" className="size-[18px]"><path d="M4.500 1.500h11v8h-11z" fill="#fff" stroke="#5c6066" /><path d="M4 1h12v3.500H4z" fill="#5c6066" /><path d="M8 7h8.500v8.500H8z" fill="#fff" stroke="#5c6066" /><path d="M8 6.500h9v2.500H8z" fill="#5c6066" /><path d="M2 6v6h5" fill="none" stroke="#5c6066" strokeWidth="1.500" /><path d="M2.500.5l16 17" stroke="#fff" /><path d="M1 .5l16.500 17" stroke="#7d8288" strokeWidth="1.300" /></svg>
      </button>
      <span className="w-3" />
      <Divider />
      <button aria-label="控制台视图" className={`${btn} ml-2 size-[26px] border-2 border-[#7fa6d6] bg-[#dbe9f8]`}>
        <svg viewBox="0 0 18 16" className="h-4 w-[18px]"><rect x=".5" y=".5" width="17" height="15" fill="#fff" stroke="#55595e" /><path d="M0 0h18v4.500H0z" fill="#55595e" /><path d="M2.500 7h3M2.500 9.500h3M2.500 12h3" stroke="#c9b765" strokeWidth="1.200" /><path d="M7.500 7h6v4h-6z" fill="#cfdcea" stroke="#9fb2c6" /><path d="M9.500 9h6v4.500h-6z" fill="#e9f0f8" stroke="#3b6287" strokeWidth="1.200" /></svg>
      </button>
    </div>
  );
}

/* ---------- status tray ---------- */

function Ok() {
  return <circle cx="13.500" cy="13.500" r="3" fill="#3fae28" stroke="#237a14" strokeWidth=".6" />;
}

function StatusTray() {
  return (
    <div className="flex items-center gap-[5px]">
      <svg viewBox="0 0 17 17" className="size-4"><path d="M3 4h10l3 6H1z" fill="#c4c7ca" stroke="#70757a" /><path d="M.5 10H16v4H.5z" fill="#8f9499" stroke="#5f6468" /><Ok /></svg>
      <svg viewBox="0 0 17 17" className="size-4"><circle cx="8" cy="8" r="7.500" fill="#dcdee0" stroke="#9b9fa3" /><path d="M8 8L2 4l4-3zM8 8l7 2-3 4z" fill="#fff" /><circle cx="8" cy="8" r="2.200" fill="#fff" stroke="#888" /><Ok /></svg>
      <svg viewBox="0 0 17 17" className="size-4"><path d="M1 1h9v7H1z" fill="#4b95d4" stroke="#1d4e80" /><path d="M6 6h10v7H6z" fill="#8cc0ec" stroke="#1d4e80" strokeWidth="1.300" /><path d="M3 8v6h8M9 15h4" fill="none" stroke="#1d4e80" strokeWidth="1.200" /><Ok /></svg>
      <svg viewBox="0 0 17 17" className="size-4"><path d="M4 1h9v5H4z" fill="#f6f6f6" stroke="#b0b0b0" /><path d="M1 6h15v6H1z" fill="#bcbcbc" stroke="#a2a2a2" /><path d="M4 10h9v5H4z" fill="#eee" stroke="#a9a9a9" /></svg>
      <svg viewBox="0 0 17 17" className="size-4"><path d="M1 5l3-1 4-4v16l-4-4-3-1z" fill="#7fb4e2" stroke="#27598d" /><path d="M10 4c2 2 2 6 0 8M12.500 2c3 3 3 9 0 12" fill="none" stroke="#2e64a0" strokeWidth="1.300" /><Ok /></svg>
      <svg viewBox="0 0 17 17" className="size-4"><circle cx="8.500" cy="7" r="6.500" fill="#d5dbe0" stroke="#9aa2a9" /><circle cx="8.500" cy="7" r="3.300" fill="#eef2f5" stroke="#8f9aa4" /><circle cx="8.500" cy="7" r="1.300" fill="#6d7e8d" /><path d="M4 14h9l1 2H3z" fill="#b5bbc1" /></svg>
      <span className="ml-px h-4 w-px bg-[#888]" />
      <svg viewBox="0 0 17 15" className="ml-[3px] h-[15px] w-[17px]"><path d="M.5.5h16v9l-5 5H.5z" fill="#edd98a" stroke="#8f7c3d" /><path d="M11.500 14.500v-5h5z" fill="#fbf2c8" stroke="#8f7c3d" /></svg>
    </div>
  );
}

function ImeBar() {
  return (
    <div className="absolute right-[288px] bottom-[7px] flex items-end">
      <div className="-mr-8 flex flex-col">
        <div className="flex h-4 items-center gap-px pl-[89px]">
          {[0, 1].map((n) => (
            <svg key={n} viewBox="0 0 14 14" className="size-3.5"><path d="M6 1C2 4 4 11 12 11 9 14 1 13 1 7 1 4 3 1 6 1z" fill="#ffd65c" stroke="#ee9a2e" /></svg>
          ))}
          <svg viewBox="0 0 14 14" className="size-3.5"><path d="M7 0l1.500 2L11 1.500l.5 2.500 2.500 1-1 2 1 2-2.500 1-.5 2.500-2.500-.5L7 14l-1.500-2-2.500.5L2.500 10 0 9l1-2-1-2 2.500-1L3 1.500l2.500.5z" fill="#ee9a2e" /><circle cx="7" cy="7" r="4" fill="#ffd65c" /><path d="M4.500 6h2M7.500 6h2M5 9q2 1 4 0" stroke="#b5651a" fill="none" /></svg>
          <svg viewBox="0 0 17 14" className="h-3.5 w-[17px]"><path d="M4 .5h9L16.500 5l-8 8.500L.5 5z" fill="#fb9f4e" stroke="#d25c1c" /><path d="M4 1l2 4 2.500-4L11 5l2-4" fill="#ffd0a0" /><path d="M5.500 5l3 5 3-5" fill="none" stroke="#b53c0e" strokeWidth="1.500" /></svg>
        </div>
        <div className="mt-0.5 flex h-7 w-[187px] items-center gap-1.5 rounded-l-full border border-[#4a94e8] bg-white pr-8 pl-1 text-[#2d8be8]">
          <svg viewBox="0 0 16 16" className="size-4" fill="none" stroke="currentColor" strokeWidth="1.200"><path d="M5.500 7V4q0-2 2.500-2t2.500 2v3M4.500 7h7v6.500h-7zM7 10h2" /></svg>
          <button aria-label="中文" className="w-4 text-sm leading-4 font-bold">中</button>
          <svg viewBox="0 0 16 16" className="size-4"><path d="M11 2c5 5 1 13-5 12-2 0-3-1-4-2 7 0 10-5 9-10z" fill="currentColor" /></svg>
          <svg viewBox="0 0 16 16" className="size-4"><circle cx="5" cy="8" r="2" fill="none" stroke="currentColor" strokeWidth="1.200" /><path d="M10 7h3v3l-2 3v-3h-1z" fill="currentColor" /></svg>
          <svg viewBox="0 0 16 16" className="size-4"><path d="M14.500 4.500L12 7 9.500 6.500 9 4l2.500-2.500C8 .5 5.500 3 6.500 6L1.500 11.500c-1 2 1.500 4 3 2.500L10 9c3 1 5.500-1.500 4.500-4.500z" fill="currentColor" /></svg>
          <svg viewBox="0 0 16 16" className="size-4"><path d="M2 2h3V1h4v1h3v3H6v9H2z" fill="currentColor" /><path d="M7 6h5l2 2v7H7zM8.500 9h4M8.500 12h4" fill="#fff" stroke="currentColor" strokeWidth="1.300" /></svg>
          <svg viewBox="0 0 16 16" className="size-4" fill="none" stroke="currentColor" strokeWidth="1.500"><circle cx="8" cy="8" r="7" /><path d="M4.500 9q3.500 4 7 0M5.500 5.500v1M10.500 5.500v1" /></svg>
        </div>
      </div>
      <svg viewBox="0 0 50 50" className="relative size-[50px]">
        <circle cx="25" cy="25" r="23.500" fill="url(#night)" stroke="#2f86e0" strokeWidth="2.500" />
        <path d="M24 34C12 34 6 30 7 24c1-5 8-6 11-2 1-8 12-10 14 0 2 8-5 9-8 12zM24 34c-3-7 0-14 6-14 3 0 5 2 5 4 4-2 9 1 8 5-2 4-10 5-19 5z" fill="none" stroke="#d6f2f6" strokeWidth="1.500" />
        <path d="M27 9v4M24 38v2M15 38v1M35 36v2M30 42v1M20 43v1M11 30v1M29 12h3" stroke="#4fd6dd" strokeWidth="1.500" />
      </svg>
    </div>
  );
}

const menus = ['文件(F)', '编辑(E)', '查看(V)', '虚拟机(M)', '选项卡(T)', '帮助(H)'];

export default function App() {
  return (
    <div className="relative flex h-screen flex-col overflow-hidden bg-white font-['Noto_Sans','Noto_Sans_CJK_SC',sans-serif] text-xs text-black">
      <Gradients />

      <header className="flex h-[23px] shrink-0 items-center pr-[19px] pl-0.5 text-[#8c8c8c]">
        <svg viewBox="0 0 16 16" className="size-4">
          <rect x=".5" y=".5" width="15" height="15" rx="4" fill="#3f9cb0" stroke="#7a5b20" />
          <path d="M1 5v7q0 3 3 3h8V8" fill="none" stroke="#e0a93d" strokeWidth="2" />
          <rect x="3" y="3" width="10" height="10" rx="2" fill="#e6b14c" stroke="#7a5b20" strokeWidth=".8" />
          <rect x="5.500" y="5.500" width="5" height="5" fill="#fff" stroke="#246e80" strokeWidth="1.200" />
        </svg>
        <span className="ml-1 flex-1 text-[13px]">Windows 8.x x64 - VMware Workstation</span>
        <div className="flex items-center gap-[35px]">
          <button aria-label="最小化"><svg viewBox="0 0 11 11" className="size-[11px]"><path d="M0 5.500h11" stroke="#777" /></svg></button>
          <button aria-label="向下还原"><svg viewBox="0 0 11 11" className="size-[11px]" fill="none" stroke="#777"><path d="M.5 2.500h7.500v8H.5zM2.500 2.500v-2h8v8H8" /></svg></button>
          <button aria-label="关闭"><svg viewBox="0 0 11 11" className="size-[11px]"><path d="M.5.5l10 10M10.500.5l-10 10" stroke="#777" /></svg></button>
        </div>
      </header>

      <div className="flex h-[35px] shrink-0 items-center gap-px border border-[#9fc0dc] bg-gradient-to-b from-[#f5f9fe] via-[#dce9f4] to-[#bfd2ec] pb-0.5 pl-[3px]">
        {menus.map((m, i) => (
          <button key={m} className={`h-[25px] px-2 ${i === 0 ? 'bg-[#c1dcf5]' : ''}`}>
            {m}
          </button>
        ))}
        <span className="w-1" />
        <Toolbar />
      </div>

      <div className="flex h-[33px] shrink-0 items-end border-t border-[#6d7580] bg-[#d3daea] pl-[5px]">
        <div className="flex h-7 items-center rounded-t-[5px] border border-b-0 border-[#a9b6cc] bg-white pr-1.5 pl-1.5">
          <svg viewBox="0 0 16 16" className="size-4">
            <path d="M4.500.500h10v9h-10z" fill="#fff" stroke="#7b7f85" />
            <path d="M.5 5.500h10v9H.5z" fill="#fff" stroke="#7b7f85" />
            <path d="M3 8h5v4H3z" fill="none" stroke="#b9bdc2" />
            <path d="M9.500 7l6 4.500-6 4.500z" fill="#58b043" />
          </svg>
          <span className="ml-[3px] text-[11px] font-bold">Windows 8.x x64</span>
          <button aria-label="关闭标签页" className="ml-3.5">
            <svg viewBox="0 0 8 8" className="size-2"><path d="M.5.5l7 7M7.500.5l-7 7" stroke="#8fa8c4" strokeWidth="2" /></svg>
          </button>
        </div>
      </div>

      <div className="flex min-h-0 flex-1 border-l-2 border-[#8c8c8c]">
        <div className="grid min-w-0 flex-1 grid-cols-[169fr_1024fr_152fr] bg-black">
          <div className="relative col-start-2 overflow-hidden">
            <Wallpaper />
            <div className="relative grid auto-cols-[78px] grid-flow-col grid-rows-[repeat(6,104px)] justify-start pt-[30px]">
              {desktopItems.map((d, i) => (
                <button key={i} className="flex min-w-0 flex-col items-center">
                  {d.icon}
                  {d.label && (
                    <span className="mt-[3px] w-[70px] leading-[17px] text-white [text-shadow:1px_1px_2px_#000,0_0_2px_#000,1px_1px_1px_#000]">{d.label}</span>
                  )}
                </button>
              ))}
            </div>
            <Explorer />
          </div>
        </div>
        <div className="flex w-[17px] shrink-0 flex-col items-center bg-[#f0f0f0] pb-1">
          <svg viewBox="0 0 10 10" className="mt-1 size-2.5 shrink-0"><path d="M1.500 6.500L5 3l3.500 3.500" fill="none" stroke="#505050" strokeWidth="2" /></svg>
          <div className="mt-[65px] mb-[51px] w-[15px] flex-1 bg-[#cdcdcd]" />
          <svg viewBox="0 0 10 10" className="size-2.5 shrink-0"><path d="M1.500 3.500L5 7l3.500-3.500" fill="none" stroke="#505050" strokeWidth="2" /></svg>
        </div>
        <div className="w-0.5 shrink-0 bg-white" />
      </div>

      <footer className="flex h-[22px] shrink-0 items-center justify-between border-t-2 border-white bg-[#f0f0f0] pt-[3px] pr-[22px] pl-px">
        <span>要将输入定向到该虚拟机，请在虚拟机内部单击或按 Ctrl+G。</span>
        <StatusTray />
      </footer>
      <div className="flex h-2 shrink-0 items-end justify-end bg-[#0b2745] pr-[25px]">
        <span className="h-px w-4 bg-white" />
      </div>

      <ImeBar />

      <div className="absolute right-0 bottom-[95px] flex h-[59px] w-2.5 justify-end rounded-l bg-[#3c3f4c] py-2 pr-0.5">
        <span className="h-full w-1 bg-[repeating-linear-gradient(to_bottom,transparent_0_1px,#3c3f4c_1px_2px),linear-gradient(to_bottom,#15171f_0_32%,#e0c65a_36%,#8fd07a_65%,#3fc3c9)]" />
      </div>
    </div>
  );
}
